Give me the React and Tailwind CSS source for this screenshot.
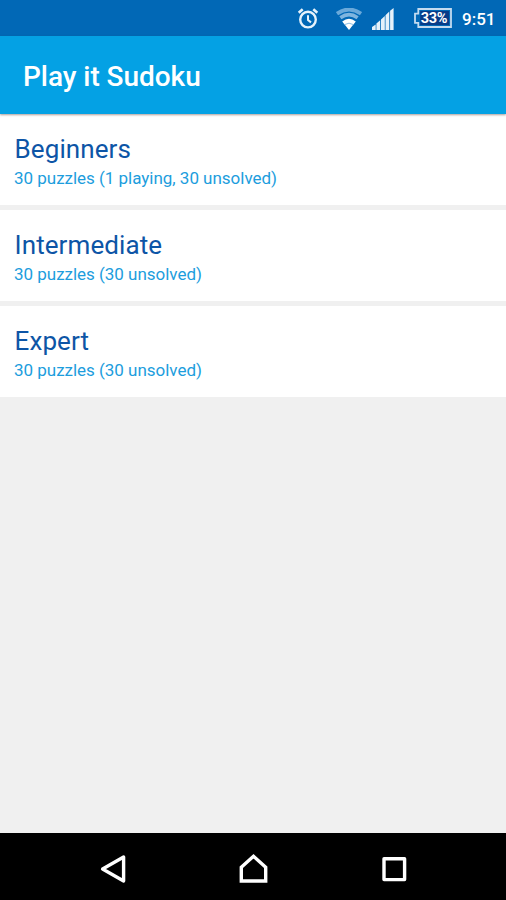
const levels = [
  { name: 'Beginners', info: '30 puzzles (1 playing, 30 unsolved)' },
  { name: 'Intermediate', info: '30 puzzles (30 unsolved)' },
  { name: 'Expert', info: '30 puzzles (30 unsolved)' },
];

const AlarmIcon = () => (
  <svg className="w-[22px] h-[22px]" viewBox="0 0 22 22" fill="none" stroke="#e6f2fb">
    <circle cx="11" cy="11.6" r="7.8" strokeWidth="2.4" />
    <path d="M11 7.2v4.8l3 2.4" strokeWidth="2" />
    <path d="M1.7 4.8l4-3.6M20.3 4.8l-4-3.6" strokeWidth="2.6" />
  </svg>
);

const WifiIcon = () => (
  <svg className="w-[26px] h-[22px]" viewBox="0 0 26 22" fill="none">
    <path d="M1 5.6Q13-2.6 25 5.6" stroke="#6aa9da" strokeWidth="3.8" />
    <path d="M4.4 9.8Q13 3.6 21.6 9.8" stroke="#7fb5df" strokeWidth="3.6" />
    <path d="M6.2 13.4Q13 8 19.8 13.4L13 22z" fill="#fff" />
    <path d="M8.6 16.6Q13 13.8 17.4 16.6" stroke="#7fb5df" strokeWidth="0.9" />
  </svg>
);

const SignalIcon = () => (
  <svg className="w-[22px] h-[22px]" viewBox="0 0 22 22" fill="#e6f1fa">
    <path d="M0 22v-3l3.7-2.6V22zM4.4 22v-6.4L8.2 12.2V22zM9 22V11.4l3.8-3.4V22zM13.5 22V7.2l3.8-3.6V22zM18.1 22V2.8L21.6 0v22z" />
  </svg>
);

const Battery = () => (
  <div className="relative w-[38px] h-5">
    <svg className="absolute inset-0" width="38" height="20" viewBox="0 0 38 20">
      <path
        d="M4.3 1H37v18H4.3v-4.2H1V5.6h3.3z"
        fill="#0168b6"
        stroke="#c3dbf0"
        strokeWidth="1.8"
      />
      <path d="M6.3 3H35v14H6.3z" fill="#083c88" />
    </svg>
    <span className="absolute inset-0 pl-[2px] text-center text-[14.5px] leading-[21px] font-bold tracking-[-0.3px] text-white">
      33%
    </span>
  </div>
);

const StatusBar = () => (
  <div className="h-9 bg-[#0168b6] flex items-start pt-2 pl-[297px]">
    <AlarmIcon />
    <div className="ml-[17px]">
      <WifiIcon />
    </div>
    <div className="ml-[10px]">
      <SignalIcon />
    </div>
    <div className="ml-5">
      <Battery />
    </div>
    <span className="ml-[10px] text-[17px] leading-[22px] font-medium text-white">9:51</span>
  </div>
);

const App = () => {
  return (
    <div className="w-[506px] h-[900px] flex flex-col overflow-hidden bg-[#f0f0f0] font-['Roboto',sans-serif]">
      <StatusBar />

      {/* App bar */}
      <header className="relative z-10 h-[78px] bg-[#04a1e4] pl-[23px] flex items-center shadow-[0_1px_2px_rgba(90,60,50,0.5)]">
        <h1 className="text-[28px] font-medium tracking-[-0.05px] text-white pt-[3px]">Play it Sudoku</h1>
      </header>

      {/* Levels */}
      <main className="flex-1 flex flex-col gap-[5px]">
        {levels.map((level) => (
          <div key={level.name} className="h-[91px] bg-white pl-[14px] pt-[19px]">
            <h2 className="text-[26px] leading-[32px] tracking-[0.1px] pl-[0.5px] text-[#0d55a6]">{level.name}</h2>
            <p className="text-[17px] leading-[26px] tracking-[-0.02px] text-[#1c9ddd]">{level.info}</p>
          </div>
        ))}
      </main>

      {/* Navigation bar */}
      <nav className="h-[67px] bg-black">
        <svg width="506" height="67" viewBox="0 0 506 67" fill="none" stroke="#fff" strokeWidth="3.4">
          <path d="M123.6 24v24L102.6 36z" strokeLinejoin="round" />
          <path d="M241.3 48V34.2L253.5 23.3l12.2 10.9V48z" strokeLinejoin="miter" />
          <path d="M384 25.8h20.6v20.8H384z" strokeLinejoin="round" />
        </svg>
      </nav>
    </div>
  );
};

export default App;
